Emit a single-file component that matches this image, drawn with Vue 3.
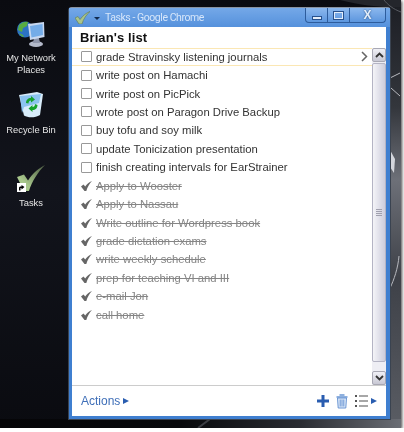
<template>
  <div class="desktop">
    <svg class="wallpaper" width="401" height="428" viewBox="0 0 401 428">
      <defs>
        <linearGradient id="strip" x1="0" y1="0" x2="0" y2="1">
          <stop offset="0" stop-color="#1c1e24" />
          <stop offset=".25" stop-color="#33363c" />
          <stop offset=".42" stop-color="#6d7078" />
          <stop offset=".65" stop-color="#3e4148" />
          <stop offset="1" stop-color="#5a5d64" />
        </linearGradient>
        <linearGradient id="floor" x1="0" y1="0" x2="1" y2="0">
          <stop offset="0" stop-color="#050507" />
          <stop offset=".45" stop-color="#08090c" />
          <stop offset=".75" stop-color="#2a2c32" />
          <stop offset="1" stop-color="#6a6d74" />
        </linearGradient>
      </defs>
      <rect x="388" width="13" height="428" fill="url(#strip)" />
      <rect y="419" width="401" height="9" fill="url(#floor)" />
      <path d="M198 428l12-9" fill="none" stroke="#3c3e44" stroke-width="2" />
      <path d="M390 78l10-5M391 88l9 8M399 256c-1 12-5 24-9 32" fill="none" stroke="#b8bac0" stroke-width="1" />
      <path d="M390 150l5 9-1 14-4-6z" fill="#d4d6dc" />
      <path d="M340 0c20 5 38 7 48 7h13V0z" fill="#24262c" />
      <path d="M384 0c4 5 9 9 17 12" fill="none" stroke="#5a5d64" />
    </svg>

    <div class="desk-icon net">
      <svg width="30" height="30" viewBox="0 0 30 30">
        <circle cx="9" cy="10.500" r="8" fill="#2c72c4" />
        <path d="M3 6c3-3 7-4 9-3l-1 4-4 2-1 4-4-2z" fill="#58ad42" />
        <path d="M3 14l4 2 1 2c-2 0-4-2-5-4z" fill="#58ad42" />
        <ellipse cx="20" cy="25" rx="7" ry="3" fill="#b4bacb" />
        <path d="M18 19h5l1 5h-7z" fill="#8f96ab" />
        <path d="M12 5l16-2 .5 15-14.500 3z" fill="#c8d8f0" />
        <path d="M14 7l12.500-2 .5 11-11.500 2.500z" fill="#74ace8" />
      </svg>
      <span>My Network<br>Places</span>
    </div>

    <div class="desk-icon bin">
      <svg width="26" height="26" viewBox="0 0 26 26">
        <path d="M1 3l18-3 6 2-3 21c-5 3-12 3-16 .5z" fill="#d8ecfa" />
        <path d="M2 4l21-2-2 9-15 4-2 6z" fill="#8cc4f0" />
        <path d="M13 6c-3 0-5 2-5 5l2.500.5c0-2 1-3 2.500-3v2l4-3-4-3.500zM17 12c0 2-1 3-2.500 3v-2l-4 3.500 4 3.500v-2c3 0 5-2 5-5z" fill="#16a32e" />
      </svg>
      <span>Recycle Bin</span>
    </div>

    <div class="desk-icon tasks">
      <svg width="28" height="27" viewBox="0 0 28 27">
        <defs>
          <linearGradient id="chk" x1="0" y1="1" x2="1" y2="0">
            <stop offset=".3" stop-color="#a8c78c" />
            <stop offset="1" stop-color="#4c5c42" />
          </linearGradient>
        </defs>
        <path d="M0 12l7-2.500 4 6C16 8 22 3 28 0 21 7 15 16 12 26H7z" fill="url(#chk)" />
      </svg>
      <div class="shortcut">
        <svg width="9" height="9" viewBox="0 0 9 9">
          <path d="M2 7.500V4.500l1-1h1.500V2L7.500 4 4.500 6.500V5H3.500v2.500z" fill="#000" />
        </svg>
      </div>
      <span>Tasks</span>
    </div>

    <div class="window">
      <div class="titlebar">
        <svg class="title-check" width="15" height="13" viewBox="0 0 15 13">
          <path d="M0 7l3-1.500 2 3C8 4.500 11 2 15 .5 11 4 8.500 8 7 13H4z" fill="#a9c58c" stroke="#62794f" stroke-width=".6" />
        </svg>
        <span class="menu-caret"></span>
        <span class="title-text">Tasks - Google Chrome</span>
        <div class="win-btns">
          <div class="win-btn min-btn"><i class="min"></i></div>
          <div class="win-btn max-btn"><i class="max"></i></div>
          <div class="win-btn close">X</div>
        </div>
      </div>

      <div class="client">
        <div class="list-title">Brian's list</div>
        <div class="main">
          <div class="rows">
            <div
              v-for="(task, i) in tasks"
              :key="task.text"
              class="row"
              :class="{ selected: i === 0, done: task.done }"
            >
              <svg v-if="task.done" class="tick" width="11" height="10" viewBox="0 0 11 10">
                <path d="M0 5.500l2.500-2 1.700 2C6 3 8 1 11 0 8.500 2.500 6.500 6 5.300 10H3.500z" fill="#666" />
              </svg>
              <span v-else class="box"></span>
              <span class="label">{{ task.text }}</span>
              <svg v-if="i === 0" class="chevron" width="7" height="11" viewBox="0 0 7 11">
                <path d="M1 1l4.500 4.500L1 10" fill="none" stroke="#666" stroke-width="1.500" />
              </svg>
            </div>
          </div>
          <div class="scrollbar">
            <div class="sb-btn">
              <svg width="9" height="6" viewBox="0 0 9 6"><path d="M1 5l3.500-3.500L8 5" fill="none" stroke="#333" stroke-width="1.800" /></svg>
            </div>
            <div class="sb-thumb"><i></i><i></i><i></i><i></i></div>
            <div class="sb-btn">
              <svg width="9" height="6" viewBox="0 0 9 6"><path d="M1 1l3.500 3.500L8 1" fill="none" stroke="#333" stroke-width="1.800" /></svg>
            </div>
          </div>
        </div>
        <div class="footer">
          <span class="actions">Actions</span>
          <span class="arrow"></span>
          <div class="tools">
            <svg width="12" height="12" viewBox="0 0 12 12"><path d="M4.500 0h3v4.500H12v3H7.500V12h-3V7.500H0v-3h4.500z" fill="#2a5db0" /></svg>
            <svg width="12" height="15" viewBox="0 0 12 15">
              <path d="M3.500 1h5M.5 3h11" stroke="#6a96d4" stroke-width="1.300" fill="none" />
              <path d="M1.500 4l.7 10h7.600l.7-10z" fill="#dce8f8" stroke="#6a96d4" />
              <path d="M4.200 5.500v7M6 5.500v7M7.800 5.500v7" stroke="#6a96d4" fill="none" />
            </svg>
            <div class="list-btn">
              <svg width="13" height="12" viewBox="0 0 13 12">
                <path d="M0 0h2v2H0zM0 5h2v2H0zM0 10h2v2H0z" fill="#555" />
                <path d="M4 .300h9v1.400H4zM4 5.300h9v1.400H4zM4 10.300h9v1.400H4z" fill="#8a8a8a" />
              </svg>
              <span class="arrow"></span>
            </div>
          </div>
        </div>
      </div>
    </div>
  </div>
</template>

<script setup>
const tasks = [
  { text: 'grade Stravinsky listening journals' },
  { text: 'write post on Hamachi' },
  { text: 'write post on PicPick' },
  { text: 'wrote post on Paragon Drive Backup' },
  { text: 'buy tofu and soy milk' },
  { text: 'update Tonicization presentation' },
  { text: 'finish creating intervals for EarStrainer' },
  { text: 'Apply to Wooster', done: true },
  { text: 'Apply to Nassau', done: true },
  { text: 'Write outline for Wordpress book', done: true },
  { text: 'grade dictation exams', done: true },
  { text: 'write weekly schedule', done: true },
  { text: 'prep for teaching VI and III', done: true },
  { text: 'e-mail Jon', done: true },
  { text: 'call home', done: true },
];
</script>

<style>
html, body { margin: 0; background: #fff; }
</style>

<style scoped>
.desktop {
  position: relative;
  width: 401px;
  height: 428px;
  overflow: hidden;
  background: linear-gradient(180deg, #0a0b10 0%, #12141c 45%, #0a0b10 100%);
  box-shadow: 1px 1px 3px #444;
  font-family: "Liberation Sans", Arial, sans-serif;
  filter: blur(.4px);
}
.wallpaper { position: absolute; left: 0; top: 0; }
.desk-icon {
  position: absolute;
  left: -5px;
  width: 72px;
  color: #e4e4e4;
  font-size: 9.400px;
  line-height: 11.500px;
  text-align: center;
  display: flex;
  flex-direction: column;
  align-items: center;
}
.net { top: 19px; }
.net svg { margin-bottom: 3px; }
.bin { top: 92px; }
.bin svg { margin-bottom: 6px; }
.tasks { top: 165px; }
.tasks svg { margin-bottom: 5px; }
.shortcut {
  position: absolute;
  left: 22px;
  top: 18px;
  width: 9px;
  height: 9px;
  background: #fff;
}
.shortcut svg { display: block; margin: 0; }

.window {
  position: absolute;
  left: 68px;
  top: 7px;
  width: 323px;
  height: 413px;
  padding: 0 4px 3px 3px;
  box-sizing: border-box;
  background: #3f7fd0;
  border: 1px solid #3a4350;
  border-top-color: #8a93a0;
  border-radius: 4px 4px 0 0;
  display: flex;
  flex-direction: column;
}
.titlebar {
  height: 19px;
  flex: none;
  display: flex;
  align-items: center;
  background: linear-gradient(180deg, #74a8e8, #5591dc);
  margin: 0 -4px 0 -3px;
  padding: 0 4px 0 6px;
}
.title-check { flex: none; }
.menu-caret {
  margin: 2px 4px 0 4px;
  border-left: 3px solid transparent;
  border-right: 3px solid transparent;
  border-top: 3px solid #10294e;
}
.title-text {
  color: #d6e6fa;
  font-family: Roboto, sans-serif;
  font-size: 10.500px;
  letter-spacing: -.45px;
  margin-left: 1px;
}
.win-btns {
  margin-left: auto;
  display: flex;
  align-self: flex-start;
  height: 14px;
  border: 1px solid #2d5c9c;
  border-top: none;
  border-radius: 0 0 4px 4px;
  background: linear-gradient(180deg, #8cb8ee, #5c96de);
}
.win-btn {
  width: 21px;
  display: flex;
  align-items: center;
  justify-content: center;
  border-right: 1px solid #2d5c9c;
}
.win-btn.close {
  width: 35px;
  border-right: none;
  color: #e4eefa;
  font-size: 12px;
  font-weight: 700;
  text-shadow: 0 0 2px #1f4478;
}
.win-btn .min { width: 8px; height: 2px; margin-top: 6px; background: #e4eefa; border: 1px solid #28518c; }
.win-btn .max { width: 7px; height: 5px; border: 2px solid #e4eefa; outline: 1px solid #28518c; outline-offset: -1px; }

.client {
  flex: 1;
  min-height: 0;
  background: #fff;
  display: flex;
  flex-direction: column;
}
.list-title {
  height: 20.500px;
  flex: none;
  padding-left: 8px;
  font-size: 13px;
  letter-spacing: .1px;
  font-weight: 700;
  line-height: 22px;
  color: #111;
}
.main {
  flex: 1;
  min-height: 0;
  display: flex;
}
.rows { flex: 1; }
.row {
  height: 18.430px;
  box-sizing: border-box;
  display: flex;
  align-items: center;
  padding-left: 9px;
  font-size: 11.300px;
  color: #333;
  border: 1px solid transparent;
  border-width: 1px 0;
}
.row.selected { border-color: #fbe7b4; }
.box {
  width: 9px;
  height: 9px;
  flex: none;
  border: 1px solid #999;
  border-radius: 1px;
  margin-right: 4px;
}
.tick { flex: none; margin-right: 4px; }
.done .label { color: #858585; text-decoration: line-through; }
.chevron { margin-left: auto; margin-right: 4px; }
.scrollbar {
  width: 14px;
  flex: none;
  display: flex;
  flex-direction: column;
  background: #eeeef4;
}
.sb-btn {
  height: 14px;
  flex: none;
  display: flex;
  align-items: center;
  justify-content: center;
  background: linear-gradient(180deg, #f0f0f6, #c8c8d4);
  border: 1px solid #a8a8b4;
  border-radius: 2px;
  box-sizing: border-box;
}
.sb-thumb {
  flex: 1;
  margin: 1px 0 9px;
  border: 1px solid #b4b4c4;
  border-radius: 2px;
  box-sizing: border-box;
  background: linear-gradient(90deg, #f4f4f8, #cdcddc);
  display: flex;
  flex-direction: column;
  align-items: center;
  justify-content: center;
  gap: 1px;
}
.sb-thumb i { width: 6px; height: 1px; background: #a0a0ae; }
.footer {
  height: 31px;
  flex: none;
  box-sizing: border-box;
  border-top: 1px solid #ccc;
  display: flex;
  align-items: center;
  padding: 0 9px;
}
.actions { color: #3f6fb8; font-size: 12px; margin-right: 3px; }
.arrow {
  border-left: 6px solid #2a5db0;
  border-top: 3.500px solid transparent;
  border-bottom: 3.500px solid transparent;
}
.tools {
  margin-left: auto;
  display: flex;
  align-items: center;
  gap: 7px;
}
.list-btn { display: flex; align-items: center; gap: 3px; }
</style>
